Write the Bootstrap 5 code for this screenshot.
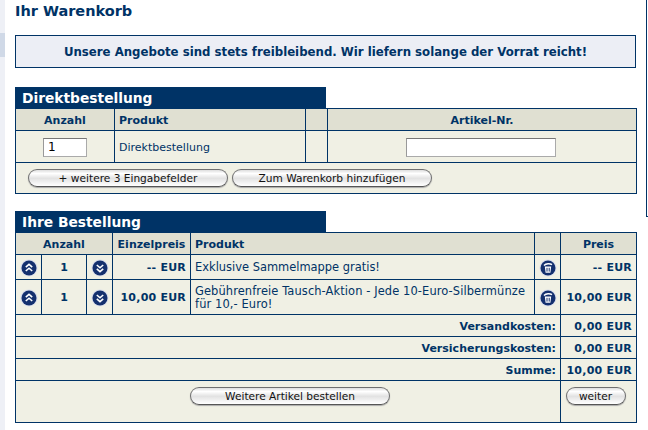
<!DOCTYPE html>
<html lang="de"><head><meta charset="utf-8"><title>Ihr Warenkorb</title>
<link href="https://cdn.jsdelivr.net/npm/bootstrap@5.3.0/dist/css/bootstrap.min.css" rel="stylesheet">
<style>
html,body{height:430px;overflow:hidden}
body{background:#fff;color:#003366;font:11px/13px "DejaVu Sans",Verdana,sans-serif}
.shell{height:430px}
.rail-l{width:5px;background:#eef0f6;flex:none}
.rail-l i{display:block;height:24px;margin-top:33px;background:#d0d9e7}
.mainc{width:621px;margin-left:10px;flex:none}
.rail-r{width:2px;margin-left:10px;height:217px;border-left:1px solid #003366;border-bottom:1px solid #003366;flex:none}
.ttl{font-size:14.5px;line-height:15px;font-weight:700;margin:4px 0 0;height:31px}
.noti{height:33px;background:#eceef5;border:1px solid #003366;font-size:11.75px;font-weight:700;line-height:32px;text-align:center;margin-bottom:19px}
.tabhd{width:311px;height:21px;background:#003366;color:#fff;font-size:13.8px;font-weight:700;line-height:22px;padding-left:7px}
.grid{table-layout:fixed;width:621px;border-collapse:collapse;margin:0;background:#f0f0e4}
.grid td,.grid th{border:1px solid #003366;padding:1px 4px 0;color:#003366;background:#f0f0e4;box-shadow:none;vertical-align:middle}
.grid th{background:#e0e0d2;font-weight:700;font-size:11px}
.rh1{height:22px}.rh2{height:32px}.rh3{height:31px}
.rb1{height:25px}.rb2{height:35px}.rb3{height:22px}.rb4{height:42px}
.num{font-weight:700;text-align:right}
.grid td.eur{letter-spacing:.22px}
.grid td.prod{font-size:11.45px}
.grid td.prod2{letter-spacing:.1px}
.grid td.act{vertical-align:top;padding-top:6px}
.grid td.wide{padding-left:8px}
.grid td.narrow{padding-right:10px}
.fld{height:19px;border:1px solid #aaa;border-top-color:#777;border-left-color:#999;background:#fff;padding:0 0 0 4px;font:12px "DejaVu Sans",sans-serif;color:#000;display:block;margin:0 auto;border-radius:0}
.f1{width:44px}.f2{width:150px}
.grid td.artk{padding:1px 5px 0 3px}
.aqua{height:18px;padding:0;border:1px solid #6f6f6f;border-bottom-color:#555;border-radius:9px;background:linear-gradient(#dedede 0,#fff 22%,#e2e2e2 52%,#f2f2f2 78%,#fff 100%);box-shadow:0 1px 1px #aaa;color:#111;font:10.6px/15px "DejaVu Sans",sans-serif;--bs-btn-font-size:10.6px}
.b200{width:200px}.b60{width:60px}
.ic{width:18px;height:18px;display:block;margin:0 auto}
.cc0{width:26px}.cc1{width:45px}.cc2{width:26px}.cc3{width:78px}.cc4{width:344px}.cc5{width:26px}.cc6{width:76px}
.dd0{width:99px}.dd1{width:191px}.dd2{width:22px}.dd3{width:309px}
.gap2nd{margin-top:17px}
.grid td.btnrow{padding:0 0 0 12px}
.btnset{gap:4px}
.grid td.mid{padding:2px 0 0}
</style></head><body>
<div class="shell d-flex">
<div class="rail-l"><i></i></div>
<div class="mainc">
<h1 class="ttl">Ihr Warenkorb</h1>
<div class="noti">Unsere Angebote sind stets freibleibend. Wir liefern solange der Vorrat reicht!</div>
<div class="tabhd">Direktbestellung</div>
<table class="grid">
<colgroup><col class="dd0"><col class="dd1"><col class="dd2"><col class="dd3"></colgroup>
<tr class="rh1"><th class="text-center">Anzahl</th><th>Produkt</th><th></th><th class="text-center">Artikel-Nr.</th></tr>
<tr class="rh2"><td><input class="fld f1" value="1" aria-label="Anzahl"></td><td>Direktbestellung</td><td></td><td class="artk"><input class="fld f2" aria-label="Artikel-Nr."></td></tr>
<tr class="rh3"><td colspan="4" class="btnrow"><div class="d-flex btnset"><button class="btn aqua b200">+ weitere 3 Eingabefelder</button><button class="btn aqua b200">Zum Warenkorb hinzufügen</button></div></td></tr>
</table>
<div class="tabhd gap2nd">Ihre Bestellung</div>
<table class="grid">
<colgroup><col class="cc0"><col class="cc1"><col class="cc2"><col class="cc3"><col class="cc4"><col class="cc5"><col class="cc6"></colgroup>
<tr class="rh1"><th colspan="3" class="text-center">Anzahl</th><th class="text-center">Einzelpreis</th><th>Produkt</th><th></th><th class="text-center">Preis</th></tr>
<tr class="rb1"><td class="mid"><svg class="ic" viewBox="0 0 18 18"><use href="#up"/></svg></td><td class="text-center fw-bold">1</td><td class="mid"><svg class="ic" viewBox="0 0 18 18"><use href="#dn"/></svg></td><td class="num eur">-- EUR</td><td class="prod">Exklusive Sammelmappe gratis!</td><td class="mid"><svg class="ic" viewBox="0 0 18 18"><use href="#tr"/></svg></td><td class="num eur">-- EUR</td></tr>
<tr class="rb2"><td class="mid"><svg class="ic" viewBox="0 0 18 18"><use href="#up"/></svg></td><td class="text-center fw-bold">1</td><td class="mid"><svg class="ic" viewBox="0 0 18 18"><use href="#dn"/></svg></td><td class="num eur">10,00 EUR</td><td class="prod prod2">Gebührenfreie Tausch-Aktion - Jede 10-Euro-Silbermünze<br>für 10,- Euro!</td><td class="mid"><svg class="ic" viewBox="0 0 18 18"><use href="#tr"/></svg></td><td class="num eur">10,00 EUR</td></tr>
<tr class="rb3"><td colspan="6" class="num">Versandkosten:</td><td class="num eur">0,00 EUR</td></tr>
<tr class="rb3"><td colspan="6" class="num">Versicherungskosten:</td><td class="num eur">0,00 EUR</td></tr>
<tr class="rb3"><td colspan="6" class="num">Summe:</td><td class="num eur">10,00 EUR</td></tr>
<tr class="rb4"><td colspan="6" class="text-center act wide"><button class="btn aqua b200">Weitere Artikel bestellen</button></td><td class="text-center act narrow"><button class="btn aqua b60">weiter</button></td></tr>
</table>
</div>
<div class="rail-r"></div>
</div>
<svg width="0" height="0" class="position-absolute"><defs>
<g id="up"><circle cx="9" cy="9" r="8.5" fill="#d8dcea"/><circle cx="9" cy="9" r="7.5" fill="#14306e"/><path d="M5.8 8.2 9 5.4l3.2 2.8M5.8 12 9 9.2l3.2 2.8" fill="none" stroke="#fff" stroke-width="1.6"/></g>
<g id="dn"><circle cx="9" cy="9" r="8.5" fill="#d8dcea"/><circle cx="9" cy="9" r="7.5" fill="#14306e"/><path d="M5.8 6 9 8.8 12.2 6M5.8 9.8 9 12.6l3.2-2.8" fill="none" stroke="#fff" stroke-width="1.6"/></g>
<g id="tr"><circle cx="9" cy="9" r="8.5" fill="#d8dcea"/><circle cx="9" cy="9" r="7.5" fill="#14306e"/><path d="M5 6.4 C7 4.2 11 4.2 13 5.6" stroke="#fff" stroke-width="1.5" fill="none"/><path d="M5.8 7.4h6.4l-.8 6.4H6.6z" fill="#fff"/><path d="M8 8.8v3.8M10.2 8.8v3.8" stroke="#14306e" stroke-width="1"/></g>
</defs></svg>
</body></html>
